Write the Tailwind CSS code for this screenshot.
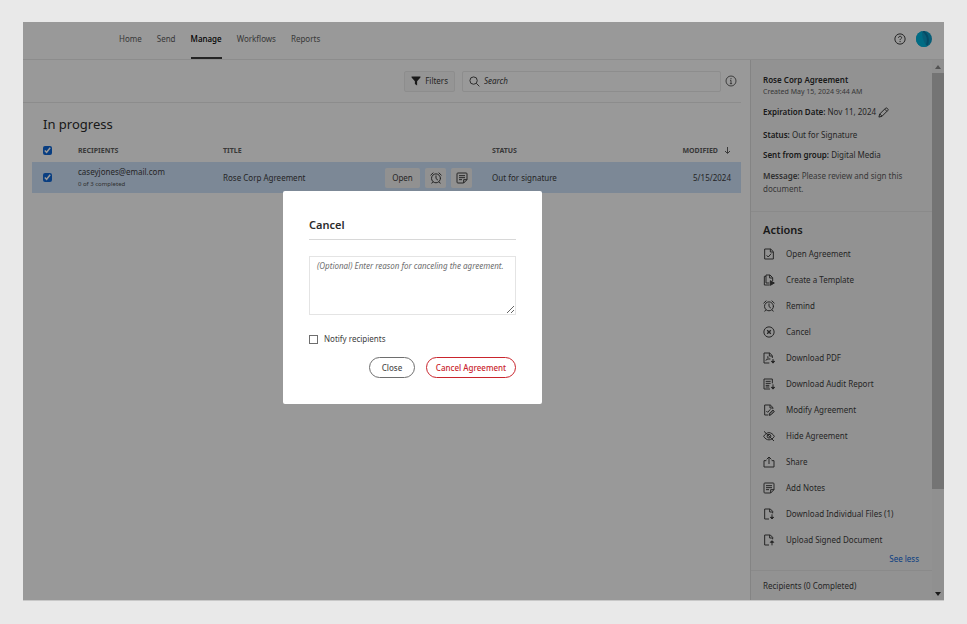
<!DOCTYPE html>
<html lang="en">
  <head>
    <meta charset="UTF-8" />
    <meta name="viewport" content="width=device-width, initial-scale=1.0" />
    <title>Manage agreements</title>
    <script src="https://cdn.jsdelivr.net/npm/@tailwindcss/browser@4"></script>
  </head>

  <body
    class="min-h-screen bg-[#e9e9e9] pt-[22px] px-[23px] pb-6 font-['Noto_Sans',sans-serif] text-[8px] leading-3 text-[#3e3e3e]"
  >
    <!-- icons used more than once -->
    <svg class="hidden">
      <symbol id="alarm" viewBox="0 0 18 18">
        <g fill="none" stroke="currentColor" stroke-width="1.5" stroke-linecap="round">
          <circle cx="9" cy="9.5" r="6.7" />
          <path d="M9 5.8v4l2.4 2M1.2 4.6 4.6 1.4M16.8 4.6l-3.4-3.2M4 15l-1.2 1.8M14 15l1.2 1.8" />
        </g>
      </symbol>
      <symbol id="note" viewBox="0 0 18 18">
        <path d="M11.5 16.5H2.8a1.3 1.3 0 0 1-1.3-1.3V2.8a1.3 1.3 0 0 1 1.3-1.3h12.4a1.3 1.3 0 0 1 1.3 1.3V11.5zM11.5 16.5v-5h5M4.500 5.500h9M4.500 8.500h9M4.500 11.500h4.500" fill="none" stroke="currentColor" stroke-width="1.500" stroke-linejoin="round" />
      </symbol>
    </svg>

    <div class="relative bg-white border-b border-[#c8c8c8]">
      <header class="flex items-center h-[38px] pl-24 pr-3 border-b border-[#eaeaea]">
        <nav class="flex self-stretch gap-[15px] leading-[34px] text-[#606060]">
          <a href="#">Home</a>
          <a href="#">Send</a>
          <a href="#" class="text-black font-medium border-b-2 border-[#3c3c3c]">Manage</a>
          <a href="#">Workflows</a>
          <a href="#">Reports</a>
        </nav>
        <div class="ml-auto mb-1 flex items-center gap-2.5">
          <button aria-label="Help">
            <svg class="size-3" viewBox="0 0 18 18" fill="none" stroke="#3c3c3c" stroke-width="1.5">
              <circle cx="9" cy="9" r="7.700" />
              <path d="M6.800 7.200c0-3 4.600-3 4.600-.2 0 1.700-2.300 1.700-2.300 3.700M9.100 12v1.700" />
            </svg>
          </button>
          <button class="size-4 rounded-full overflow-hidden" aria-label="Account">
            <svg class="size-4" viewBox="0 0 16 16">
              <rect width="16" height="16" fill="#0c9cc6" />
              <path d="M0 0h6c0 5 1 10 5 16H0z" fill="#00b4dc" />
              <path d="M7 0c4 3 6 8 4 14" fill="none" stroke="#0a7ca8" stroke-width="2" />
            </svg>
          </button>
        </div>
      </header>

      <div class="flex">
        <main class="flex-1 min-w-0 pl-[9px] pr-[9px]">
          <div class="flex items-center h-[43px] -ml-[9px] border-b border-[#eaeaea]">
            <button class="ml-auto flex items-center gap-1 h-[21px] px-1.5 bg-[#f9f9f9] border border-[#ececec] rounded-xs">
              <svg class="size-2.5" viewBox="0 0 18 18">
                <path d="M1 1h16v1.500l-6 7V17l-4-2.500v-5l-6-7z" fill="#2c2c2c" />
              </svg>
              Filters
            </button>
            <div class="flex items-center ml-[7px] w-[259px] h-[21px] pl-1.5 border border-[#ebebeb] rounded-xs">
              <svg class="size-[11px]" viewBox="0 0 18 18" fill="none" stroke="#3c3c3c" stroke-width="1.500">
                <circle cx="7.500" cy="7.500" r="6" />
                <path d="m12 12 5 5" />
              </svg>
              <input type="search" aria-label="Search" placeholder="Search" class="flex-1 min-w-0 pl-1 outline-none placeholder:italic placeholder:text-[#3c3c3c]" />
            </div>
            <button class="ml-1 mr-1" aria-label="Search help">
              <svg class="size-3" viewBox="0 0 18 18" fill="none" stroke="#4c4c4c" stroke-width="1.300">
                <circle cx="9" cy="9" r="7.500" />
                <path d="M9 4.500v1.800M7.500 8H9v5M7.300 13h3.400" />
              </svg>
            </button>
          </div>

          <h1 class="mt-[11px] ml-[11px] text-[13px] leading-5 text-[#2c2c2c]">In progress</h1>

          <table class="w-full mt-[5px] table-fixed text-left">
            <colgroup>
              <col class="w-[46px]" />
              <col class="w-[145px]" />
              <col class="w-[162px]" />
              <col class="w-[107px]" />
              <col />
              <col class="w-[90px]" />
            </colgroup>
            <thead class="h-[23px] text-[7px] text-[#606060]">
              <tr>
                <th class="pl-[11px]"><input type="checkbox" checked aria-label="Select all" class="block size-[9px] accent-[#1068d8]" /></th>
                <th>RECIPIENTS</th>
                <th>TITLE</th>
                <th></th>
                <th>STATUS</th>
                <th>
                  <div class="flex items-center justify-end gap-1.5 pr-2.5">
                    MODIFIED
                    <svg class="size-[7px]" viewBox="0 0 14 14" fill="none" stroke="#606060" stroke-width="2"><path d="M7 0v12M2 8l5 5 5-5" /></svg>
                  </div>
                </th>
              </tr>
            </thead>
            <tbody>
              <tr class="h-[31px] bg-[#cfe3fb]">
                <td class="pl-[11px]"><input type="checkbox" checked aria-label="Select Rose Corp Agreement" class="block size-[9px] accent-[#1068d8]" /></td>
                <td>
                  <p>caseyjones@email.com</p>
                  <p class="text-[6px] text-[#505050]">0 of 3 completed</p>
                </td>
                <td>Rose Corp Agreement</td>
                <td>
                  <div class="flex gap-[5px]">
                    <button class="h-5 w-[35px] bg-[#f2f2f2] rounded-xs">Open</button>
                    <button class="h-5 w-[21px] grid place-items-center bg-[#f2f2f2] rounded-xs" aria-label="Remind"><svg class="size-3"><use href="#alarm" /></svg></button>
                    <button class="h-5 w-[21px] grid place-items-center bg-[#f2f2f2] rounded-xs" aria-label="Add notes"><svg class="size-3"><use href="#note" /></svg></button>
                  </div>
                </td>
                <td>Out for signature</td>
                <td class="text-right pr-2.5">5/15/2024</td>
              </tr>
            </tbody>
          </table>
        </main>

        <aside class="flex w-[194px] bg-[#f4f4f4] border-l border-[#dcdcdc]">
          <div class="flex-1 min-w-0">
            <section class="px-3 pt-[13px] pb-4 border-b border-[#e6e6e6]">
              <h2 class="font-semibold leading-[13px] text-[#2c2c2c]">Rose Corp Agreement</h2>
              <p class="text-[7px] text-[#606060]">Created May 15, 2024 9:44 AM</p>
              <p class="flex items-center gap-0.5 mt-2">
                <b class="font-semibold text-[#2c2c2c]">Expiration Date:</b> Nov 11, 2024
                <button aria-label="Edit expiration date">
                  <svg class="size-[11px]" viewBox="0 0 18 18" fill="none" stroke="#2c2c2c" stroke-width="1.500" stroke-linejoin="round">
                    <path d="m1.500 16.500 1.300-5L12.500 1.800a1.500 1.500 0 0 1 2 0l1.700 1.700a1.500 1.500 0 0 1 0 2l-9.700 9.700zM11 3.500 14.500 7M3 11.500 6.500 15" />
                  </svg>
                </button>
              </p>
              <p class="mt-[11px]"><b class="font-semibold text-[#2c2c2c]">Status:</b> Out for Signature</p>
              <p class="mt-2"><b class="font-semibold text-[#2c2c2c]">Sent from group:</b> Digital Media</p>
              <p class="mt-2 leading-[13px] text-[#606060]"><b class="font-semibold text-[#505050]">Message:</b> Please review and sign this document.</p>
            </section>

            <section class="px-3 pt-2.5 pb-[5px] border-b border-[#e6e6e6]">
              <h2 class="text-[11px] leading-4 font-semibold text-[#2c2c2c]">Actions</h2>
              <ul class="mt-[3px] [&_button]:flex [&_button]:items-center [&_button]:gap-[11px] [&_button]:h-[26px] [&_svg]:size-3 [&_svg]:shrink-0">
                <li>
                  <button>
                    <svg viewBox="0 0 18 18" fill="none" stroke="currentColor" stroke-width="1.500" stroke-linejoin="round"><path d="M2.500 1.500h9l4 4v11h-13zM11 1.500V6h4.500M5.500 11l2.300 2.500 4.500-5" /></svg>
                    Open Agreement
                  </button>
                </li>
                <li>
                  <button>
                    <svg viewBox="0 0 18 18" fill="none" stroke="currentColor" stroke-width="1.500" stroke-linejoin="round"><path d="M4.500 3.500H2v13h8M4.500 1.500h6l4 4v5M4.500 1.500v12h5M10 1.500V6h4.500" /><path d="m11 10 6 3.500-6 3.500z" fill="currentColor" /></svg>
                    Create a Template
                  </button>
                </li>
                <li>
                  <button><svg><use href="#alarm" /></svg>Remind</button>
                </li>
                <li>
                  <button>
                    <svg viewBox="0 0 18 18" fill="none" stroke="currentColor" stroke-width="1.500"><circle cx="9" cy="9" r="7.700" /><path d="m6.300 6.300 5.400 5.400M11.700 6.300l-5.400 5.400" stroke-width="2" /></svg>
                    Cancel
                  </button>
                </li>
                <li>
                  <button>
                    <svg viewBox="0 0 18 18" fill="none" stroke="currentColor" stroke-width="1.500" stroke-linejoin="round"><path d="M9.500 16.500h-8v-15h8.500l4 4V9M9.500 1.500V6H14" /><path d="M4 12.500c2-1 3.500-4 3.200-6 0 2.500 1.500 4 3.800 4-2.500 0-4.500.5-7 2z" stroke-width="1" /><path d="M15 10.500V16M12.500 14l2.500 2.700 2.500-2.700z" fill="currentColor" /></svg>
                    Download PDF
                  </button>
                </li>
                <li>
                  <button>
                    <svg viewBox="0 0 18 18" fill="none" stroke="currentColor" stroke-width="1.500" stroke-linejoin="round"><path d="M10.500 16.500h-9v-15H14V8M4 5h7.500M4 8h7.500M4 11h5.500M4 13.500h5.500" /><path d="M15 9.500V16M12.500 14l2.500 2.700 2.500-2.700z" fill="currentColor" /></svg>
                    Download Audit Report
                  </button>
                </li>
                <li>
                  <button>
                    <svg viewBox="0 0 18 18" fill="none" stroke="currentColor" stroke-width="1.500" stroke-linejoin="round"><path d="M7.500 16.500h-5v-15h8.500l4 4V7M10.500 1.500V6H15M5 10.500 7 12.500l4-4.500" /><path d="m9 17 .8-3 5-5 2.200 2.200-5 5z" fill="currentColor" fill-opacity=".4" /></svg>
                    Modify Agreement
                  </button>
                </li>
                <li>
                  <button>
                    <svg viewBox="0 0 18 18" fill="none" stroke="currentColor" stroke-width="1.500"><path d="M1 9.500C3 6 6 4 9 4s6 2 8 5.500C15 13 12 14.800 9 14.800S3 13 1 9.500zM1.500 2l15 14.500" /><circle cx="9" cy="9.300" r="2.800" /></svg>
                    Hide Agreement
                  </button>
                </li>
                <li>
                  <button>
                    <svg viewBox="0 0 18 18" fill="none" stroke="currentColor" stroke-width="1.500" stroke-linejoin="round"><path d="M5 7H1.500v9.500h15V7H13M9 12V1.800M5.500 5 9 1.500 12.500 5" /></svg>
                    Share
                  </button>
                </li>
                <li>
                  <button><svg><use href="#note" /></svg>Add Notes</button>
                </li>
                <li>
                  <button>
                    <svg viewBox="0 0 18 18" fill="none" stroke="currentColor" stroke-width="1.500" stroke-linejoin="round"><path d="M9 16.500H2.500v-15H11l3.500 3.500v3M10 1.500V6h4.500" /><path d="M13.500 9.500V16M11 14l2.500 2.500L16 14z" fill="currentColor" /></svg>
                    Download Individual Files (1)
                  </button>
                </li>
                <li>
                  <button>
                    <svg viewBox="0 0 18 18" fill="none" stroke="currentColor" stroke-width="1.500" stroke-linejoin="round"><path d="M9 16.500H2.500v-15H11l3.500 3.500v3M10 1.500V6h4.500" /><path d="M13.500 17v-6.500M11 12.500l2.500-2.500 2.500 2.500z" fill="currentColor" /></svg>
                    Upload Signed Document
                  </button>
                </li>
              </ul>
              <p class="text-right pr-px"><a href="#" class="text-[#1068d8]">See less</a></p>
            </section>

            <h2 class="px-3 pt-[9px] pb-2">Recipients (0 Completed)</h2>
          </div>

          <!-- scrollbar -->
          <div class="flex flex-col items-center w-3 bg-[#f1f1f1]">
            <div class="grid place-items-center h-[13px]">
              <svg class="w-1.5 h-1" viewBox="0 0 6 4"><path d="M0 4 3 0l3 4z" fill="#8a8a8a" /></svg>
            </div>
            <div class="flex-1 w-full"><div class="h-[81%] bg-[#c1c1c1]"></div></div>
            <div class="grid place-items-center h-[13px]">
              <svg class="w-1.5 h-1" viewBox="0 0 6 4"><path d="M0 0h6L3 4z" fill="#2c2c2c" /></svg>
            </div>
          </div>
        </aside>
      </div>

      <!-- cancel dialog -->
      <div class="absolute inset-0 bg-black/40">
        <form role="dialog" aria-labelledby="dialog-title" class="absolute top-[169px] left-[260px] w-[259px] px-[26px] pt-[25px] pb-[26px] bg-white rounded-xs">
          <h2 id="dialog-title" class="pb-[5px] text-[11px] leading-[18px] font-semibold text-[#2c2c2c] border-b border-[#d8d8d8]">Cancel</h2>
          <textarea
            aria-label="Reason for canceling"
            placeholder="(Optional) Enter reason for canceling the agreement."
            class="block w-full h-[59px] mt-4 px-[7px] py-[3px] border border-[#e4e4e4] outline-none placeholder:italic placeholder:text-[#6e6e6e]"
          ></textarea>
          <div class="flex items-center gap-1.5 mt-[18px]">
            <input type="checkbox" id="notify" class="appearance-none size-[9px] border border-[#6e6e6e]" />
            <label for="notify">Notify recipients</label>
          </div>
          <div class="flex justify-end gap-[11px] mt-3">
            <button type="button" class="h-[21px] w-[46px] rounded-full border border-[#6e6e6e] font-medium text-[#505050]">Close</button>
            <button type="submit" class="h-[21px] w-[90px] rounded-full border border-[#c9252d] font-medium text-[#c9252d]">Cancel Agreement</button>
          </div>
        </form>
      </div>
    </div>
  </body>
</html>
